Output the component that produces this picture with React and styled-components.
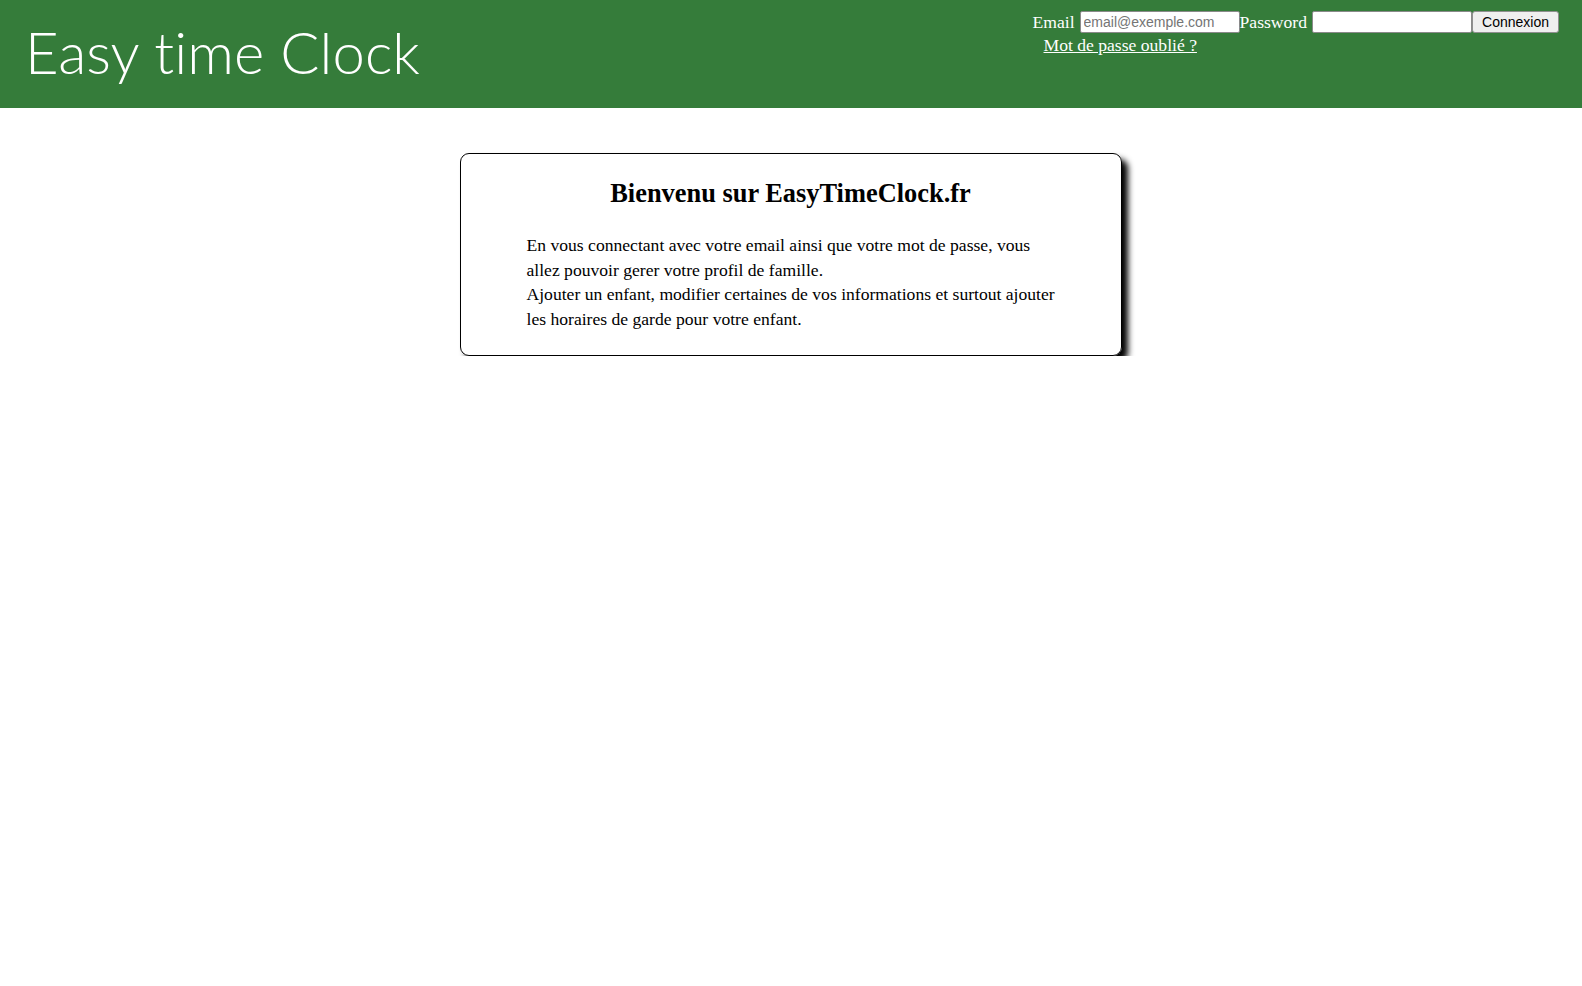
import React from "react";
import styled, { createGlobalStyle } from "styled-components";

const GlobalStyle = createGlobalStyle`
  body {
    margin: 0;
    font-family: "Liberation Serif", "Times New Roman", serif;
    background: #ffffff;
  }
`;

const Header = styled.header`
  height: 108px;
  background: #357c3a;
  display: flex;
  justify-content: space-between;
  align-items: flex-start;
  color: #ffffff;
`;

const Logo = styled.h1`
  margin: 0;
  padding: 16px 0 0 25px;
  font-family: Lato, "Open Sans", sans-serif;
  font-weight: 300;
  font-size: 58px;
  line-height: 72px;
  letter-spacing: 0.1px;
`;

const LoginArea = styled.div`
  padding: 11px 23px 0 0;
  display: flex;
  flex-direction: column;
`;

const LoginForm = styled.form`
  display: flex;
  align-items: center;
  font-size: 17.6px;
`;

const Label = styled.label`
  margin-right: ${(p) => p.$gap || 0}px;
`;

const Field = styled.input`
  box-sizing: border-box;
  width: 160px;
  height: 22px;
  padding: 1px 3px;
  border: 1px solid #8a8a8a;
  border-radius: 2px;
  background: #ffffff;
  font-family: "Liberation Sans", Arial, sans-serif;
  font-size: 14px;
  color: #222;
  &::placeholder {
    color: #757575;
  }
`;

const Button = styled.button`
  box-sizing: border-box;
  height: 22px;
  width: 87px;
  padding: 0 6px;
  border: 1px solid #8f8f8f;
  border-radius: 3px;
  background: #efefef;
  font-family: "Liberation Sans", Arial, sans-serif;
  font-size: 14px;
  color: #000;
`;

const ForgotLink = styled.a`
  margin: 2px 0 0 11px;
  color: #ffffff;
  font-size: 17.6px;
  text-decoration: underline;
`;

const Main = styled.main`
  padding: 45px 1px 0 0;
  display: flex;
  justify-content: center;
`;

const Card = styled.section`
  box-sizing: border-box;
  width: 662px;
  border: 1px solid #000;
  border-radius: 9px;
  box-shadow: 6px 6px 6px #000;
  padding: 23px 0 24px 66px;
`;

const Title = styled.h2`
  margin: 0 66px 24px 0;
  text-align: center;
  font-size: 26.4px;
  font-weight: bold;
  line-height: 32px;
`;

const Text = styled.p`
  margin: 0;
  width: 536px;
  font-size: 17.6px;
  line-height: 24.6px;
`;

export default function App() {
  return (
    <>
      <GlobalStyle />
      <Header>
        <Logo>Easy time Clock</Logo>
        <LoginArea>
          <LoginForm onSubmit={(e) => e.preventDefault()}>
            <Label $gap={5}>Email</Label>
            <Field type="email" placeholder="email@exemple.com" />
            <Label $gap={5}>Password</Label>
            <Field type="password" />
            <Button type="submit">Connexion</Button>
          </LoginForm>
          <ForgotLink href="#">Mot de passe oublié ?</ForgotLink>
        </LoginArea>
      </Header>
      <Main>
        <Card>
          <Title>Bienvenu sur EasyTimeClock.fr</Title>
          <Text>
            En vous connectant avec votre email ainsi que votre mot de passe, vous
            allez pouvoir gerer votre profil de famille.
            <br />
            Ajouter un enfant, modifier certaines de vos informations et surtout
            ajouter les horaires de garde pour votre enfant.
          </Text>
        </Card>
      </Main>
    </>
  );
}
